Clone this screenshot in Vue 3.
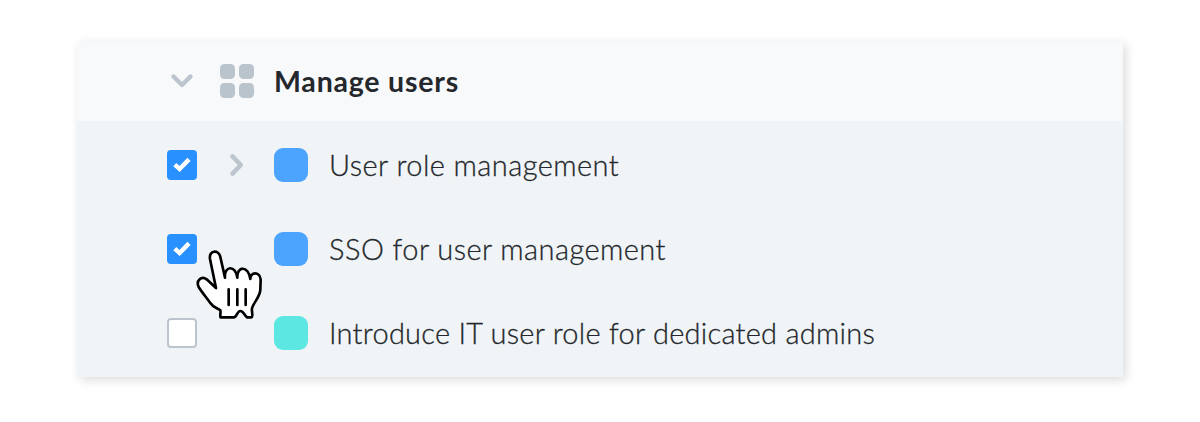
<template>
  <div class="stage">
    <div class="card">
      <div class="header">
        <svg class="toggle" viewBox="0 0 24 24">
          <path d="M3.5 7.5 L12 16 L20.5 7.5" />
        </svg>
        <div class="grid-icon">
          <span v-for="n in 4" :key="n"></span>
        </div>
        <h2 class="title">Manage users</h2>
      </div>

      <div class="list">
        <div v-for="item in items" :key="item.id" class="row" @click="item.checked = !item.checked">
          <span class="checkbox" :class="{ checked: item.checked }">
            <svg v-if="item.checked" viewBox="0 0 30 30">
              <path d="M7.8 14.6 L12.6 19 L22 9.4" />
            </svg>
          </span>
          <span class="expander">
            <svg v-if="item.expandable" class="toggle" viewBox="0 0 24 24">
              <path d="M8.5 3.4 L16.8 12 L8.5 20.6" />
            </svg>
          </span>
          <span class="swatch" :class="item.color"></span>
          <span class="label" :class="item.id">{{ item.label }}</span>
        </div>
      </div>
    </div>

    <!-- Hand pointer over the list -->
    <svg class="pointer" viewBox="0 0 240 240">
      <path
        class="hand"
        d="M78 129 L60 42 C56 15 86 13 91 36 L105 98 C101 63 137 58 142 98 C140 63 175 60 181 102 C180 80 210 78 212 104 L211 134 C210 158 190 172 186 190 C184 200 191 216 184 217 L171 217 C164 213 161 198 151 198 C141 198 141 217 131 217 L92 217 C89 217 93 201 91 196 C83 189 69 187 61 174 C48 156 35 141 26 126 C17 106 35 92 50 103 Z"
      />
      <path class="crease" d="M116 133 V180 M142 133 V180 M167 133 V180" />
    </svg>
  </div>
</template>

<script setup>
import { ref } from 'vue';

const items = ref([
  { id: 'roles', label: 'User role management', color: 'blue', checked: true, expandable: true },
  { id: 'sso', label: 'SSO for user management', color: 'blue', checked: true, expandable: false },
  { id: 'admins', label: 'Introduce IT user role for dedicated admins', color: 'teal', checked: false, expandable: false },
]);
</script>

<style>
body {
  background: #fff;
}
</style>

<style scoped>
.stage {
  position: relative;
  box-sizing: border-box;
  width: 1200px;
  height: 422px;
  padding: 41px 77px 45px;
  overflow: hidden;
  font-family: Lato, "Liberation Sans", sans-serif;
  color: #24282c;
}

.card {
  height: 336px;
  background: #f0f4f7;
  box-shadow: 3px 3px 10px rgba(0, 0, 0, 0.14);
}

/* --- HEADER --- */
.header {
  display: flex;
  align-items: center;
  height: 80px;
  padding-left: 93px;
  background: #f8f9fb;
}

.toggle {
  display: block;
  width: 24px;
  height: 24px;
  fill: none;
  stroke: #bcc4cd;
  stroke-width: 4.4;
  stroke-linecap: round;
  stroke-linejoin: round;
}

.grid-icon {
  display: grid;
  grid-template-columns: 15px 15px;
  gap: 4px;
  margin-left: 26px;
}

.grid-icon span {
  height: 15px;
  border-radius: 4.5px;
  background: #bac4cd;
}

.title {
  margin: 0 0 0 20px;
  font-size: 28.5px;
  line-height: 36px;
  font-weight: 700;
  letter-spacing: 0.8px;
  white-space: nowrap;
}

/* --- ROWS --- */
.list {
  padding-top: 2px;
}

.row {
  display: flex;
  align-items: center;
  height: 84px;
  padding-left: 90px;
}

.checkbox {
  box-sizing: border-box;
  width: 30px;
  height: 30px;
  border: 2px solid #bcc5cd;
  border-radius: 4px;
  background: #fff;
}

.checkbox.checked {
  border: none;
  background: #2890ff;
}

.checkbox svg {
  display: block;
  fill: none;
  stroke: #fff;
  stroke-width: 4.4;
}

.expander {
  width: 24px;
  margin: 0 26px 0 27px;
}

.swatch {
  width: 34px;
  height: 34px;
  margin-right: 21px;
  border-radius: 9px;
}

.swatch.blue {
  background: #4ca4ff;
}

.swatch.teal {
  background: #5ce7e3;
}

.label {
  font-size: 29px;
  line-height: 36px;
  font-weight: 300;
  letter-spacing: 0.43px;
  white-space: nowrap;
  -webkit-text-stroke: 0.3px #24282c;
}

.label.admins {
  letter-spacing: 0.25px;
}

/* --- POINTER --- */
.pointer {
  position: absolute;
  left: 190px;
  top: 245px;
  width: 80px;
  height: 80px;
  pointer-events: none;
  stroke: #000;
  stroke-width: 8;
  stroke-linecap: round;
  stroke-linejoin: round;
}

.hand {
  fill: #fff;
}

.crease {
  fill: none;
}
</style>
